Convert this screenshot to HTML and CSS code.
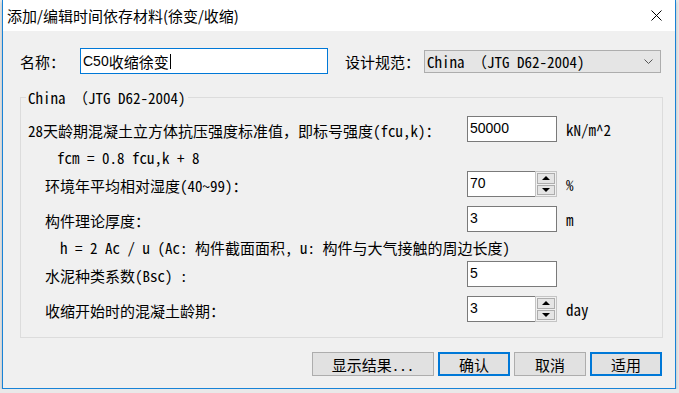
FILE: index.html
```html
<!doctype html>
<html>
<head>
    <meta charset="utf-8">
    <title>添加/编辑时间依存材料(徐变/收缩)</title>
    <link rel="stylesheet" href="styles.css">
</head>
<body>

<div class="dialog">
    <div class="titlebar">
        <span class="title">添加/编辑时间依存材料(徐变/收缩)</span>
        <a class="close">
            <svg width="11" height="11" viewBox="0 0 11 11"><path d="M0.5 0.5L10.5 10.5M10.5 0.5L0.5 10.5" stroke="#000" stroke-width="1"/></svg>
        </a>
    </div>

    <div class="client">
        <div class="top-row">
            <span class="name-label">名称：</span>
            <div class="edit name-edit"><span class="sans">C50</span>收缩徐变<span class="caret"></span></div>
            <span class="code-label">设计规范：</span>
            <div class="combo">
                <span>China （JTG D62-2004)</span>
                <svg class="chevron" width="9" height="5" viewBox="0 0 9 5"><path d="M0.5 0.5L4.5 4.5L8.5 0.5" fill="none" stroke="#555" stroke-width="1"/></svg>
            </div>
        </div>

        <fieldset class="group">
            <legend>China （JTG D62-2004)</legend>

            <div class="field first">
                <span class="label">28天龄期混凝土立方体抗压强度标准值，即标号强度(fcu,k)：</span>
                <div class="edit num">50000</div>
                <span class="unit">kN/m^2</span>
            </div>
            <div class="formula f1">fcm = 0.8 fcu,k + 8</div>
            <div class="field">
                <span class="label">环境年平均相对湿度(40~99)：</span>
                <div class="spin">
                    <div class="edit num">70</div>
                    <div class="updown"><span><i class="up"></i></span><span><i class="down"></i></span></div>
                </div>
                <span class="unit">%</span>
            </div>
            <div class="field">
                <span class="label">构件理论厚度：</span>
                <div class="edit num">3</div>
                <span class="unit">m</span>
            </div>
            <div class="formula f2">h = 2 Ac / u (Ac: 构件截面面积, u: 构件与大气接触的周边长度)</div>
            <div class="field">
                <span class="label">水泥种类系数(Bsc) :</span>
                <div class="edit num">5</div>
            </div>
            <div class="field">
                <span class="label">收缩开始时的混凝土龄期：</span>
                <div class="spin">
                    <div class="edit num">3</div>
                    <div class="updown"><span><i class="up"></i></span><span><i class="down"></i></span></div>
                </div>
                <span class="unit">day</span>
            </div>
        </fieldset>

        <div class="buttons">
            <a class="btn wide">显示结果...</a>
            <a class="btn default">确认</a>
            <a class="btn">取消</a>
            <a class="btn default">适用</a>
        </div>
    </div>
</div>

</body>
</html>
```

FILE: styles.css
```css
body {
    margin: 0;
    background: #e9e9e9;
    font-family: "Noto Sans Mono CJK SC", "Noto Sans CJK SC", sans-serif;
    font-size: 15px;
    color: #000;
}

.dialog {
    margin-left: 2px;
    width: 674px;
    height: 389px;
    box-sizing: border-box;
    border: 1px solid #1883d7;
    border-top: 0;
    background: #f0f0f0;
    box-shadow: 0 2px 3px rgba(0, 0, 0, 0.25);
}

.titlebar {
    height: 31px;
    background: #fff;
    display: flex;
    align-items: center;
    justify-content: space-between;
    padding: 0 13px 0 4px;
}
.title {
    font-family: "Noto Sans CJK SC", sans-serif;
    font-size: 15px;
    line-height: 20px;
}
.close {
    display: flex;
}

.client {
    padding: 17px 11px 0 17px;
}

.top-row {
    display: flex;
    align-items: center;
    height: 26px;
}
.name-label {
    width: 60px;
}
.code-label {
    margin-left: 17px;
    width: 79px;
}

.edit {
    box-sizing: border-box;
    height: 26px;
    background: #fff;
    border: 1px solid #7a7a7a;
    display: flex;
    align-items: center;
    padding: 0 2px;
}
.name-edit {
    width: 248px;
    border-color: #0078d7;
}
.sans, .num {
    font-family: "Liberation Sans", sans-serif;
    font-size: 14px;
}
.caret {
    display: inline-block;
    width: 1px;
    height: 15px;
    margin-left: 1px;
    background: #000;
}

.combo {
    box-sizing: border-box;
    width: 237px;
    height: 23px;
    background: #e5e5e5;
    border: 1px solid #adadad;
    display: flex;
    align-items: center;
    justify-content: space-between;
    padding: 0 7px 0 2px;
}

.group {
    margin: 15px 0 0;
    padding: 10px 0 15px;
    border: 1px solid #dcdcdc;
    min-width: 0;
    box-sizing: border-box;
    width: 643px;
}
.group legend {
    margin-left: 5px;
    padding: 0 2px;
    line-height: 17px;
}

.field {
    display: flex;
    align-items: center;
    height: 26px;
}
.field + .field {
    margin-top: 9px;
}
.field .label {
    width: 446px;
    box-sizing: border-box;
    padding-left: 24px;
    padding-top: 3px;
}
.field.first .label {
    padding-left: 7px;
}
.num {
    width: 90px;
    padding-bottom: 3px;
}
.unit {
    margin-left: 9px;
}

.formula {
    height: 29px;
    box-sizing: border-box;
    padding-top: 2px;
    line-height: 27px;
}
.f1 {
    padding-left: 36px;
}
.f2 {
    padding-left: 39px;
}

.spin {
    display: flex;
    width: 90px;
    height: 26px;
}
.spin .edit {
    flex: 1;
    width: auto;
    border-right: 0;
}
.updown {
    width: 22px;
    box-sizing: border-box;
    border: 1px solid #c4c4c4;
    padding: 1px;
    display: flex;
    flex-direction: column;
    gap: 1px;
}
.updown span {
    flex: 1;
    background: #e5e5e5;
    border: 1px solid #adadad;
    display: flex;
    align-items: center;
    justify-content: center;
}
.up {
    border-left: 4px solid transparent;
    border-right: 4px solid transparent;
    border-bottom: 4px solid #000;
}
.down {
    border-left: 4px solid transparent;
    border-right: 4px solid transparent;
    border-top: 4px solid #000;
}

.buttons {
    display: flex;
    justify-content: flex-end;
    gap: 4px;
    margin-top: 14px;
    padding-right: 2px;
}
.btn {
    box-sizing: border-box;
    width: 72px;
    height: 24px;
    background: #e1e1e1;
    border: 1px solid #adadad;
    display: flex;
    align-items: center;
    justify-content: center;
}
.btn.wide {
    width: 122px;
}
.btn.default {
    border: 2px solid #0078d7;
}
```
